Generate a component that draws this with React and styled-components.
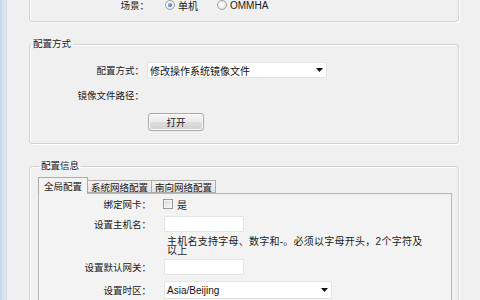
import React from 'react';
import styled, { createGlobalStyle } from 'styled-components';

const GlobalStyle = createGlobalStyle`
  html, body {
    margin: 0;
    padding: 0;
    background: #f0f0f0;
  }

  body {
    font-family: "Liberation Sans", "Noto Sans CJK SC", sans-serif;
    font-size: 9.5px;
    color: #1a1a1a;
  }
`;

const ArrowDown = () => (
  <svg width="7" height="4" viewBox="0 0 7 4">
    <path d="M0 0h7L3.5 4z" fill="#111" />
  </svg>
);

const App = () => (
  <Screen>
    <GlobalStyle />
    <SideStrip />
    <Main>
      <Group $mt={-30} $h={52} $pt={27}>
        <Row $h={14}>
          <Label $w={119}>场景：</Label>
          <Option $ml={16}>
            <Radio $checked />
            单机
          </Option>
          <Option $ml={19}>
            <Radio />
            OMMHA
          </Option>
        </Row>
      </Group>

      <Group $mt={16} $pb={12}>
        <Legend>配置方式</Legend>
        <Row $mt={12} $h={16}>
          <Label $w={114}>配置方式：</Label>
          <Select $w={180} $h={16} $ml={3}>
            修改操作系统镜像文件
            <ArrowDown />
          </Select>
        </Row>
        <Row $mt={10} $h={14}>
          <Label $w={114}>镜像文件路径：</Label>
        </Row>
        <Row $mt={11} $h={18}>
          <Button $ml={118}>打开</Button>
        </Row>
      </Group>

      <Group $mt={16} $pl={8} $pr={6}>
        <Legend>配置信息</Legend>
        <TabBar>
          <Tab $active>全局配置</Tab>
          <Tab>系统网络配置</Tab>
          <Tab>南向网络配置</Tab>
        </TabBar>
        <TabPanel>
          <Row $mt={2} $h={14}>
            <Label $w={112}>绑定网卡：</Label>
            <Option $ml={12}>
              <Checkbox />
              是
            </Option>
          </Row>
          <Row $mt={5} $h={16}>
            <Label $w={112}>设置主机名：</Label>
            <Input $ml={13} />
          </Row>
          <Hint>主机名支持字母、数字和-。必须以字母开头，2个字符及以上</Hint>
          <Row $mt={4} $h={16}>
            <Label $w={112}>设置默认网关：</Label>
            <Input $ml={13} />
          </Row>
          <Row $mt={6} $h={18}>
            <Label $w={112}>设置时区：</Label>
            <Select $w={168} $h={18} $ml={13}>
              Asia/Beijing
              <ArrowDown />
            </Select>
          </Row>
        </TabPanel>
      </Group>
    </Main>
  </Screen>
);

const Screen = styled.div`
  display: flex;
  width: 480px;
  height: 300px;
  overflow: hidden;
  background: #f0f0f0;
`;

const SideStrip = styled.div`
  flex: 0 0 7px;
  box-sizing: border-box;
  background: linear-gradient(to right, #c8d7e9, #e0e9f4);
  border-right: 1px solid #d3dde8;
`;

const Main = styled.div`
  flex: 1;
  display: flex;
  flex-direction: column;
  padding-left: 22px;
`;

const Group = styled.fieldset`
  flex: none;
  width: 430px;
  height: ${p => (p.$h ? `${p.$h}px` : 'auto')};
  min-width: 0;
  box-sizing: border-box;
  margin: ${p => p.$mt || 0}px 0 0;
  padding: ${p => p.$pt || 0}px ${p => p.$pr || 0}px ${p => p.$pb || 0}px ${p => p.$pl || 0}px;
  border: 1px solid #d2d2d2;
  border-radius: 3px;
  box-shadow: inset 1px 1px 0 #fff, 1px 1px 0 #fff;
`;

const Legend = styled.legend`
  margin-left: 1px;
  padding: 0 2px;
  line-height: 12px;
  color: #1a1a1a;
`;

const Row = styled.div`
  display: flex;
  align-items: center;
  height: ${p => p.$h}px;
  margin-top: ${p => p.$mt || 0}px;
`;

const Label = styled.span`
  flex: none;
  width: ${p => p.$w}px;
  text-align: right;
  white-space: nowrap;
  color: #1a1a1a;
`;

const Option = styled.span`
  flex: none;
  display: flex;
  align-items: center;
  gap: 3px;
  margin-left: ${p => p.$ml || 0}px;
  font-size: 10px;
  color: #1a1a1a;
`;

const Radio = styled.span`
  position: relative;
  flex: none;
  width: 10px;
  height: 10px;
  box-sizing: border-box;
  border: 1px solid #a0a0a0;
  border-radius: 50%;
  background: radial-gradient(circle at 40% 40%, #fff, #e2e2e2);

  &::after {
    content: '';
    display: ${p => (p.$checked ? 'block' : 'none')};
    position: absolute;
    left: 2px;
    top: 2px;
    width: 4px;
    height: 4px;
    border-radius: 50%;
    background: radial-gradient(circle at 35% 35%, #8ab8e6, #2a5686);
  }
`;

const Checkbox = styled.span`
  flex: none;
  width: 10px;
  height: 10px;
  box-sizing: border-box;
  margin-right: 1px;
  border: 1px solid #9a9a9a;
  background: linear-gradient(135deg, #d8d8d8, #fafafa);
  box-shadow: inset 0 0 0 1px #f4f4f4;
`;

const Select = styled.div`
  flex: none;
  display: flex;
  align-items: center;
  justify-content: space-between;
  width: ${p => p.$w}px;
  height: ${p => p.$h}px;
  box-sizing: border-box;
  margin-left: ${p => p.$ml}px;
  padding: 0 3px 0 2px;
  background: #fff;
  border: 1px solid #e4e4e4;
  font-size: 10px;
  color: #111;
`;

const Input = styled.div`
  flex: none;
  width: 80px;
  height: 16px;
  box-sizing: border-box;
  margin-left: ${p => p.$ml}px;
  background: #fff;
  border: 1px solid #e4e4e4;
`;

const Button = styled.button`
  flex: none;
  width: 56px;
  height: 18px;
  margin-left: ${p => p.$ml}px;
  padding: 0;
  border: 1px solid #a9a9a9;
  border-radius: 3px;
  background: linear-gradient(#f4f4f4 0%, #ebebeb 50%, #dddddd 51%, #d2d2d2 100%);
  box-shadow: inset 0 0 0 1px #fcfcfc;
  font: inherit;
  color: #1a1a1a;
`;

const TabBar = styled.div`
  display: flex;
  align-items: flex-end;
  height: 16px;
  margin-top: 5px;
`;

const Tab = styled.div`
  position: relative;
  z-index: ${p => (p.$active ? 1 : 0)};
  display: flex;
  align-items: center;
  justify-content: center;
  width: ${p => (p.$active ? 50 : 65)}px;
  height: ${p => (p.$active ? 17 : 13)}px;
  box-sizing: border-box;
  margin-bottom: ${p => (p.$active ? -1 : 0)}px;
  margin-left: ${p => (p.$active ? 0 : -1)}px;
  padding-bottom: ${p => (p.$active ? 1 : 0)}px;
  border: 1px solid #acacac;
  border-bottom: ${p => (p.$active ? 'none' : '1px solid #acacac')};
  background: ${p => (p.$active ? '#f3f3f3' : 'linear-gradient(#f2f2f2, #e3e3e3)')};
  color: #1a1a1a;
  white-space: nowrap;
`;

const TabPanel = styled.div`
  height: 200px;
  padding-top: 1px;
  border: 1px solid #b8b8b8;
  background: #f3f3f3;
`;

const Hint = styled.div`
  width: 258px;
  margin: 5px 0 0 128px;
  font-size: 10px;
  line-height: 9px;
  letter-spacing: 0.25px;
  color: #1a1a1a;
`;

export default App;
